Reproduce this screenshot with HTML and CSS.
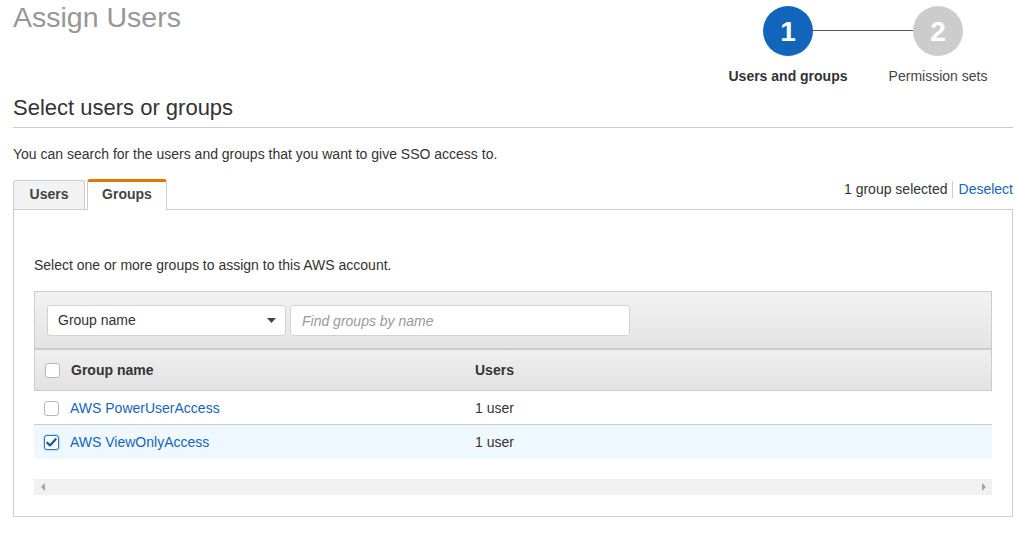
FILE: index.html
```html
<!DOCTYPE html>
<html lang="en">
<head>
<meta charset="utf-8">
<title>Assign Users</title>
<link rel="stylesheet" href="styles.css">
</head>
<body>
<div class="page">
  <header class="top">
    <h1 class="title">Assign Users</h1>
    <ol class="steps">
      <li class="step active"><span class="step-circle">1</span><span class="step-label">Users and groups</span></li>
      <li class="step"><span class="step-circle">2</span><span class="step-label">Permission sets</span></li>
    </ol>
  </header>

  <h2 class="section-title">Select users or groups</h2>
  <p class="intro">You can search for the users and groups that you want to give SSO access to.</p>

  <div class="tabbar">
    <div class="tabs">
      <button class="tab tab-users">Users</button>
      <button class="tab tab-groups active">Groups</button>
    </div>
    <div class="selection">
      <span class="sel-count">1 group selected</span>
      <a class="sel-link" href="#">Deselect</a>
    </div>
  </div>

  <div class="panel">
    <p class="panel-text">Select one or more groups to assign to this AWS account.</p>
    <div class="grid">
      <div class="filter">
        <div class="select">
          <span>Group name</span>
          <svg class="caret" width="9" height="5" viewBox="0 0 9 5"><path d="M0 0H9L4.5 5Z" fill="#444"/></svg>
        </div>
        <input class="search" type="text" placeholder="Find groups by name">
      </div>
      <div class="row head">
        <div class="cell first"><span class="cb"></span><span>Group name</span></div>
        <div class="cell">Users</div>
      </div>
      <div class="row body">
        <div class="cell first"><span class="cb"></span><a class="link" href="#">AWS PowerUserAccess</a></div>
        <div class="cell">1 user</div>
      </div>
      <div class="row body selected">
        <div class="cell first"><span class="cb checked"><svg width="13" height="13" viewBox="0 0 13 13"><path d="M2.3 6.8L5 9.4L10.6 3.2" fill="none" stroke="#1a5ca3" stroke-width="2.3" stroke-linecap="round" stroke-linejoin="round"/></svg></span><a class="link" href="#">AWS ViewOnlyAccess</a></div>
        <div class="cell">1 user</div>
      </div>
      <div class="hscroll">
        <svg width="4" height="8" viewBox="0 0 4 8"><path d="M4 0V8L0 4Z" fill="#a3a3a3"/></svg>
        <svg width="4" height="8" viewBox="0 0 4 8"><path d="M0 0V8L4 4Z" fill="#a3a3a3"/></svg>
      </div>
    </div>
  </div>
</div>
</body>
</html>
```

FILE: styles.css
```css
* { box-sizing: border-box; }
html, body { margin: 0; }
body {
  font-family: "Liberation Sans", Arial, sans-serif;
  font-size: 14px;
  line-height: 17px;
  color: #333;
  background: #fff;
}
.page { padding: 0 3px 0 13px; }

.top {
  display: flex;
  justify-content: space-between;
  align-items: flex-start;
  height: 85px;
}
.title {
  margin: 1px 0 0;
  font-size: 28.5px;
  line-height: 32px;
  font-weight: normal;
  color: #979797;
}
.steps { list-style: none; margin: 0; padding: 0; display: flex; }
.step {
  width: 150px;
  display: flex;
  flex-direction: column;
  align-items: center;
  position: relative;
}
.step-circle {
  margin-top: 6px;
  width: 50px;
  height: 50px;
  border-radius: 50%;
  background: #ccc;
  color: #fff;
  font-size: 28px;
  font-weight: bold;
  display: flex;
  align-items: center;
  justify-content: center;
}
.step.active .step-circle { background: #1166bb; }
.step-label { margin-top: 12px; color: #444; white-space: nowrap; }
.step.active .step-label { font-weight: bold; color: #333; }
.step.active::after {
  content: "";
  position: absolute;
  top: 30px;
  left: 100px;
  width: 100px;
  height: 1px;
  background: #555;
}

.section-title {
  margin: 10px 0 0;
  font-size: 22px;
  line-height: 26px;
  font-weight: normal;
  color: #333;
  padding-bottom: 6px;
  border-bottom: 1px solid #ccc;
}
.intro { margin: 18px 0 0; }

.tabbar {
  display: flex;
  justify-content: space-between;
  align-items: flex-start;
  margin-top: 16px;
}
.tabs {
  display: flex;
  align-items: flex-start;
  gap: 2px;
  height: 31px;
  margin-bottom: -1px;
  position: relative;
  z-index: 1;
}
.tab {
  font: inherit;
  font-weight: bold;
  color: #444;
  background: #f2f2f2;
  border: 1px solid #ccc;
  border-bottom: none;
  border-radius: 3px 3px 0 0;
  margin-top: 1px;
  height: 29px;
  padding: 0 0 1px;
  display: flex;
  align-items: center;
  justify-content: center;
}
.tab-users { width: 72px; }
.tab-groups { width: 80px; }
.tab.active {
  background: #fff;
  border-top: 3px solid #e07800;
  margin-top: 0;
  height: 31px;
  padding-bottom: 3px;
}
.selection {
  display: flex;
  align-items: center;
  margin-top: 2px;
}
.sel-count { padding-right: 4px; border-right: 1px solid #ccc; }
.sel-link { padding-left: 6px; color: #1166bb; text-decoration: none; }

.panel {
  border: 1px solid #ccc;
  padding: 47px 20px 21px;
}
.panel-text { margin: 0 0 17px; }

.filter {
  display: flex;
  gap: 4px;
  padding: 13px 12px 12px;
  border: 1px solid #ccc;
  border-bottom: 2px solid #ccc;
  background: linear-gradient(#f2f2f2, #e4e4e4);
}
.select {
  width: 239px;
  height: 31px;
  background: #fff;
  border: 1px solid #d2d2d2;
  border-radius: 3px;
  padding: 0 9px 0 10px;
  display: flex;
  align-items: center;
  justify-content: space-between;
  color: #333;
}
.search {
  width: 340px;
  height: 31px;
  border: 1px solid #d2d2d2;
  border-radius: 3px;
  padding: 0 11px;
  font: inherit;
  color: #333;
  background: #fff;
  outline: none;
}
.search::placeholder { color: #999; font-style: italic; }

.row {
  display: grid;
  grid-template-columns: 441px 1fr;
  align-items: center;
}
.row.head {
  grid-template-columns: 440px 1fr;
  height: 41px;
  border: 1px solid #ccc;
  border-top: none;
  background: linear-gradient(#efefef, #e2e2e2);
  font-weight: bold;
  color: #333;
}
.row.body { height: 34px; border-bottom: 1px solid #ccc; padding-top: 1px; }
.row.body.selected { height: 34px; border-bottom: none; background: #f0f8ff; }
.cell.first {
  display: flex;
  align-items: center;
  gap: 11px;
  padding-left: 10px;
}
.cb {
  width: 15px;
  height: 15px;
  flex: none;
  border: 1px solid #b8b8b8;
  border-radius: 3px;
  background: #fff;
  display: flex;
  align-items: center;
  justify-content: center;
}
.cb.checked {
  border-color: #2b78c9;
  box-shadow: 0 0 2px rgba(43, 120, 201, 0.7);
}
.link { color: #1166bb; text-decoration: none; }

.hscroll {
  margin-top: 20px;
  height: 16px;
  background: #f1f1f1;
  display: flex;
  align-items: center;
  justify-content: space-between;
  padding: 0 6px 0 7px;
}
```
